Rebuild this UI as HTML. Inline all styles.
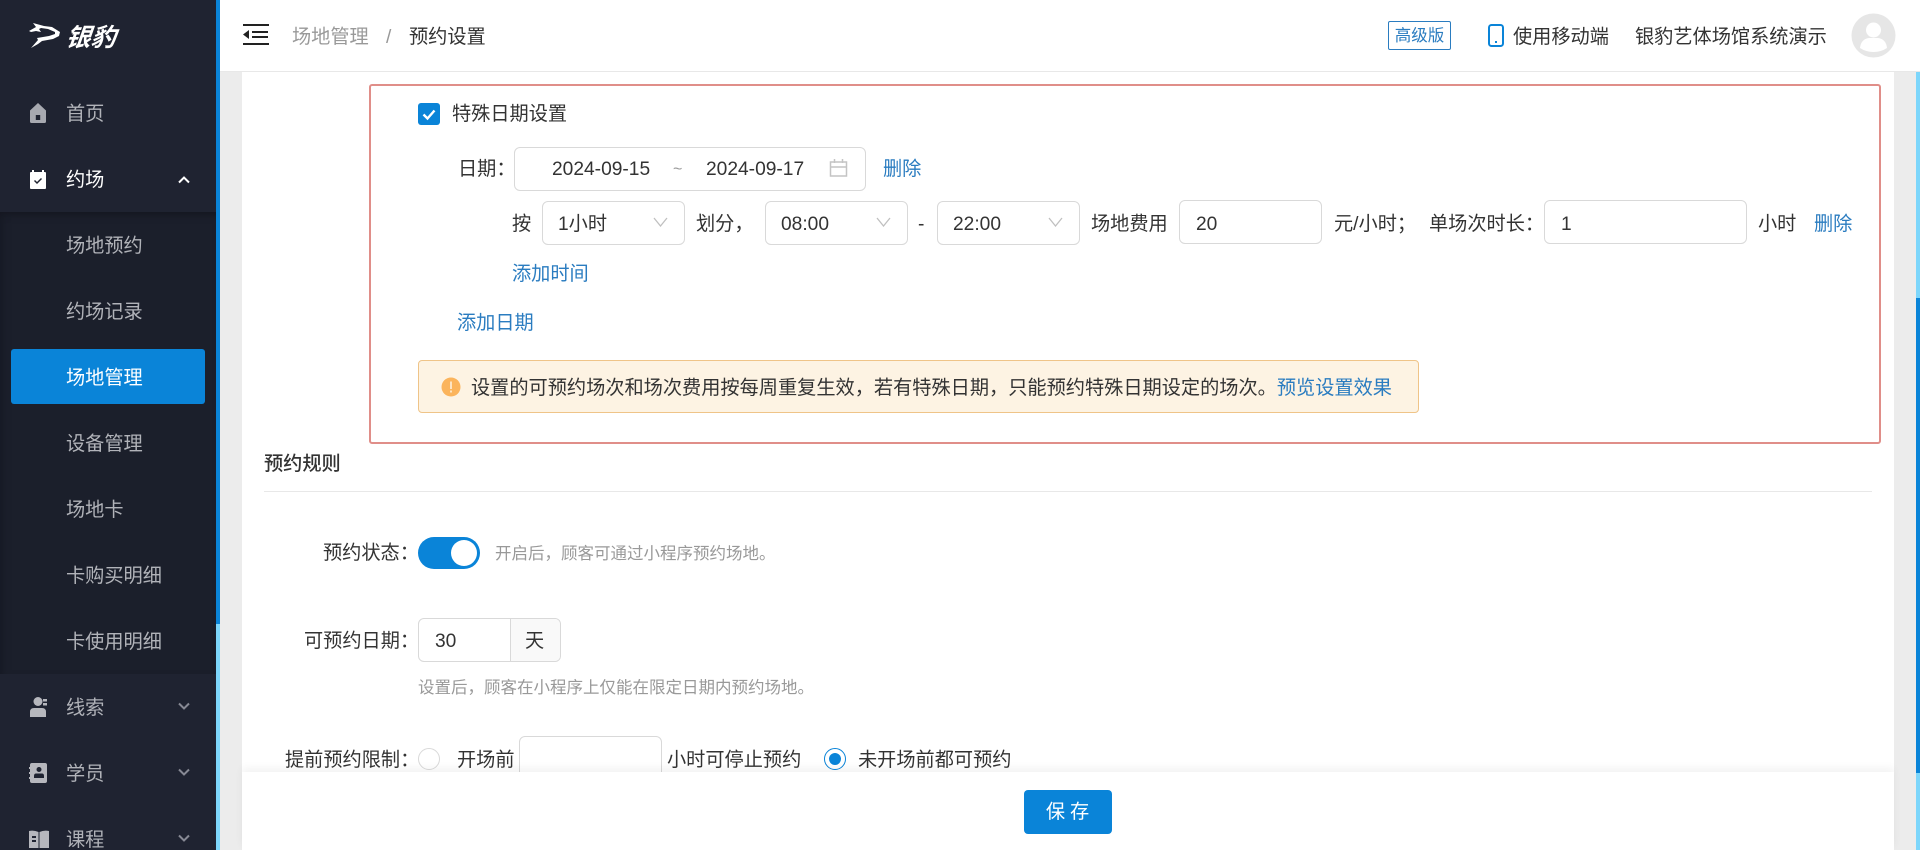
<!DOCTYPE html>
<html lang="zh-CN">
<head>
<meta charset="utf-8">
<title>预约设置</title>
<style>
*{box-sizing:border-box}
html,body{margin:0;padding:0;width:1920px;height:850px;overflow:hidden;background:#ececec}
body{position:relative;font-family:"Liberation Sans","Noto Sans CJK SC",sans-serif;font-size:19.2px;color:#333}
.a{position:absolute}
.t{position:absolute;white-space:nowrap;line-height:30px;height:30px;margin-top:2px}
.l{color:#2a7cc0}
.m{color:#b1b3b9}
.box{position:absolute;background:#fff;border:1px solid #d9d9d9;border-radius:6px}
.h{color:#999;font-size:16.5px}
svg{position:absolute;display:block}
</style>
</head>
<body>
<!-- sidebar -->
<div class="a" style="left:0;top:0;width:216px;height:850px;background:#1f2331"></div>
<div class="a" style="left:0;top:212px;width:216px;height:462px;background:#1b1f2b;box-shadow:inset 0 8px 8px -6px #14161f,inset 8px 0 8px -6px #171a25"></div>
<div class="a" style="left:216px;top:0;width:4px;height:850px;background:#7dd6fb"></div>
<div class="a" style="left:216px;top:0;width:4px;height:624px;background:#0a84d8"></div>

<svg style="left:28px;top:21px" width="34" height="29" viewBox="0 0 34 29"><path fill="#fff" d="M1 10 8 6 5 2 16 5 24 6 32 11 31 15 25 18 14 20 10 23 3 27 10 19 9 17 21 15 27 13 27 11 20 8 13 7 11 8 13 11 8 10 3 11Z"/></svg>
<div class="t" style="left:66px;top:21px;color:#fff;font-size:25px;font-weight:700;font-style:italic;letter-spacing:0;transform:skewX(-6deg)">银豹</div>

<svg style="left:29px;top:102px" width="18" height="22" viewBox="0 0 18 22"><path fill="#a7a9b0" fill-rule="evenodd" d="M9 1 17 8.500V19.500Q17 21 15.500 21H2.500Q1 21 1 19.500V8.500ZM6.800 13V18H11.200V13Z"/></svg>
<div class="t m" style="left:66px;top:98px">首页</div>

<svg style="left:29px;top:169px" width="18" height="21" viewBox="0 0 18 21"><path fill="#fff" fill-rule="evenodd" d="M3 1H5V3H13V1H15V3H16Q17 3 17 4V19Q17 20 16 20H2Q1 20 1 19V4Q1 3 2 3H3ZM5 12 8 15 13 10 12 9 8 13 6 11Z"/></svg>
<div class="t" style="left:66px;top:164px;color:#fff">约场</div>
<svg style="left:178px;top:176px" width="12" height="8" viewBox="0 0 12 8"><path fill="none" stroke="#fff" stroke-width="2" d="M1 6.500 6 1.500 11 6.500"/></svg>

<div class="t m" style="left:66px;top:230px">场地预约</div>
<div class="t m" style="left:66px;top:296px">约场记录</div>
<div class="a" style="left:11px;top:349px;width:194px;height:55px;background:#0a84d8;border-radius:3px"></div>
<div class="t" style="left:66px;top:362px;color:#fff">场地管理</div>
<div class="t m" style="left:66px;top:428px">设备管理</div>
<div class="t m" style="left:66px;top:494px">场地卡</div>
<div class="t m" style="left:66px;top:560px">卡购买明细</div>
<div class="t m" style="left:66px;top:626px">卡使用明细</div>

<svg style="left:30px;top:696px" width="18" height="22" viewBox="0 0 18 22"><circle cx="8" cy="5.500" r="4.500" fill="#b6b7bd"/><path fill="#b6b7bd" d="M0 21V16Q0 12 4 12H12Q16 12 16 16V21Z"/><rect x="13" y="3" width="4" height="2.500" fill="#b6b7bd"/><rect x="13" y="7" width="4" height="2.500" fill="#b6b7bd"/></svg>
<div class="t m" style="left:66px;top:692px">线索</div>
<svg style="left:178px;top:702px" width="12" height="8" viewBox="0 0 12 8"><path fill="none" stroke="#878994" stroke-width="2" d="M1 1.500 6 6.500 11 1.500"/></svg>

<svg style="left:29px;top:763px" width="19" height="20" viewBox="0 0 19 20"><path fill="#b6b7bd" fill-rule="evenodd" d="M3 0H16Q18 0 18 2V18Q18 20 16 20H3Q1 20 1 18V16H0V14H1V11H0V9H1V6H0V4H1V2Q1 0 3 0ZM10 4A2.500 2.500 0 1 0 10 9 2.500 2.500 0 1 0 10 4ZM5 15H15V13Q15 10.500 13 10.500H7Q5 10.500 5 13Z"/></svg>
<div class="t m" style="left:66px;top:758px">学员</div>
<svg style="left:178px;top:768px" width="12" height="8" viewBox="0 0 12 8"><path fill="none" stroke="#878994" stroke-width="2" d="M1 1.500 6 6.500 11 1.500"/></svg>

<svg style="left:29px;top:830px" width="20" height="20" viewBox="0 0 20 20"><path fill="#b6b7bd" fill-rule="evenodd" d="M0 1Q5 0 9.500 2V18H0ZM10.500 2Q15 0 20 1V18H10.500ZM3 6V8H7V6ZM3 10V12H7V10Z"/></svg>
<div class="t m" style="left:66px;top:824px">课程</div>
<svg style="left:178px;top:834px" width="12" height="8" viewBox="0 0 12 8"><path fill="none" stroke="#878994" stroke-width="2" d="M1 1.500 6 6.500 11 1.500"/></svg>

<!-- right scrollbar -->
<div class="a" style="left:1916px;top:0;width:4px;height:850px;background:#7dd6fb"></div>
<div class="a" style="left:1916px;top:298px;width:4px;height:475px;background:#0a84d8"></div>

<!-- content -->
<div class="a" style="left:242px;top:72px;width:1652px;height:778px;background:#fff"></div>

<div class="a" style="left:369px;top:84px;width:1512px;height:360px;border:2px solid #e08e89;border-radius:3px"></div>

<div class="a" style="left:418px;top:103px;width:22px;height:22px;background:#0a84d8;border-radius:3px"></div>
<svg style="left:418px;top:103px" width="22" height="22" viewBox="0 0 22 22"><path fill="none" stroke="#fff" stroke-width="2.400" d="M5.500 11.500 9.500 15.500 16.500 7.500"/></svg>
<div class="t" style="left:452px;top:98px">特殊日期设置</div>

<div class="t" style="left:458px;top:153px">日期：</div>
<div class="box" style="left:514px;top:147px;width:352px;height:44px"></div>
<div class="t" style="left:552px;top:153px">2024-09-15</div>
<div class="t" style="left:673px;top:153px;color:#999;font-size:16px">~</div>
<div class="t" style="left:706px;top:153px">2024-09-17</div>
<svg style="left:829px;top:159px" width="19" height="18" viewBox="0 0 19 18"><path fill="none" stroke="#c4c4c4" stroke-width="1.500" d="M1.500 3H17.500V17H1.500ZM1.500 8H17.500M5.500 0V4M13.500 0V4"/></svg>
<div class="t l" style="left:883px;top:153px">删除</div>

<div class="t" style="left:512px;top:208px">按</div>
<div class="box" style="left:542px;top:201px;width:143px;height:44px"></div>
<div class="t" style="left:558px;top:208px">1小时</div>
<svg style="left:653px;top:217px" width="15" height="10" viewBox="0 0 15 10"><path fill="none" stroke="#c0c0c0" stroke-width="1.300" d="M1 1 7.500 9 14 1"/></svg>
<div class="t" style="left:696px;top:208px">划分，</div>
<div class="box" style="left:765px;top:201px;width:143px;height:44px"></div>
<div class="t" style="left:781px;top:208px">08:00</div>
<svg style="left:876px;top:217px" width="15" height="10" viewBox="0 0 15 10"><path fill="none" stroke="#c0c0c0" stroke-width="1.300" d="M1 1 7.500 9 14 1"/></svg>
<div class="t" style="left:918px;top:208px">-</div>
<div class="box" style="left:937px;top:201px;width:143px;height:44px"></div>
<div class="t" style="left:953px;top:208px">22:00</div>
<svg style="left:1048px;top:217px" width="15" height="10" viewBox="0 0 15 10"><path fill="none" stroke="#c0c0c0" stroke-width="1.300" d="M1 1 7.500 9 14 1"/></svg>
<div class="t" style="left:1091px;top:208px">场地费用</div>
<div class="box" style="left:1179px;top:200px;width:143px;height:44px"></div>
<div class="t" style="left:1196px;top:208px">20</div>
<div class="t" style="left:1334px;top:208px">元/小时；</div>
<div class="t" style="left:1429px;top:208px">单场次时长：</div>
<div class="box" style="left:1544px;top:200px;width:203px;height:44px"></div>
<div class="t" style="left:1561px;top:208px">1</div>
<div class="t" style="left:1758px;top:208px">小时</div>
<div class="t l" style="left:1814px;top:208px">删除</div>

<div class="t l" style="left:512px;top:258px">添加时间</div>
<div class="t l" style="left:457px;top:307px">添加日期</div>

<div class="a" style="left:418px;top:360px;width:1001px;height:53px;background:#fdf3e3;border:1px solid #efc488;border-radius:4px"></div>
<svg style="left:441px;top:377px" width="20" height="20" viewBox="0 0 20 20"><circle cx="10" cy="10" r="9.500" fill="#fbb45c"/><rect x="9" y="4.500" width="2" height="7.500" fill="#fde4c3"/><rect x="9" y="13.500" width="2" height="2" fill="#fde4c3"/></svg>
<div class="t" style="left:471px;top:372px">设置的可预约场次和场次费用按每周重复生效，若有特殊日期，只能预约特殊日期设定的场次。<span class="l">预览设置效果</span></div>

<div class="t" style="left:264px;top:448px;font-weight:500">预约规则</div>
<div class="a" style="left:264px;top:491px;width:1608px;height:1px;background:#e8e8e8"></div>

<div class="t" style="left:323px;top:537px">预约状态：</div>
<div class="a" style="left:418px;top:537px;width:62px;height:32px;background:#0a84d8;border-radius:16px"></div>
<div class="a" style="left:451px;top:540px;width:26px;height:26px;background:#fff;border-radius:50%"></div>
<div class="t h" style="left:495px;top:537px">开启后，顾客可通过小程序预约场地。</div>

<div class="t" style="left:304px;top:625px">可预约日期：</div>
<div class="box" style="left:418px;top:618px;width:143px;height:44px;overflow:hidden"><div class="a" style="left:91px;top:0;width:50px;height:42px;background:#f9f9f9;border-left:1px solid #d9d9d9"></div></div>
<div class="t" style="left:435px;top:625px">30</div>
<div class="t" style="left:525px;top:625px">天</div>
<div class="t h" style="left:418px;top:671px">设置后，顾客在小程序上仅能在限定日期内预约场地。</div>

<div class="t" style="left:285px;top:744px">提前预约限制：</div>
<div class="a" style="left:418px;top:748px;width:22px;height:22px;background:#fff;border:1px solid #d9d9d9;border-radius:50%"></div>
<div class="t" style="left:457px;top:744px">开场前</div>
<div class="box" style="left:519px;top:736px;width:143px;height:60px"></div>
<div class="t" style="left:667px;top:744px">小时可停止预约</div>
<div class="a" style="left:824px;top:748px;width:22px;height:22px;background:#fff;border:1px solid #0a84d8;border-radius:50%"></div>
<div class="a" style="left:829px;top:753px;width:12px;height:12px;background:#0a84d8;border-radius:50%"></div>
<div class="t" style="left:858px;top:744px">未开场前都可预约</div>

<!-- footer -->
<div class="a" style="left:242px;top:772px;width:1652px;height:78px;background:#fff;box-shadow:0 -4px 8px rgba(0,0,0,.05)"></div>
<div class="a" style="left:1024px;top:790px;width:88px;height:44px;background:#0a84d8;border-radius:4px;color:#fff;text-align:center;line-height:45px;letter-spacing:5px;padding-left:4px">保存</div>

<!-- header -->
<div class="a" style="left:220px;top:0;width:1700px;height:72px;background:#fff;border-bottom:1px solid #e8e8e8"></div>
<svg style="left:243px;top:23px" width="26" height="23" viewBox="0 0 26 23"><path fill="#222" d="M0 1H26V3H0ZM9 8H25V10H9ZM9 13H25V15H9ZM0 20H26V22H0ZM6 7V16L0 11.500Z"/></svg>
<div class="t" style="left:292px;top:21px;color:#999">场地管理</div>
<div class="t" style="left:386px;top:21px;color:#999">/</div>
<div class="t" style="left:409px;top:21px">预约设置</div>

<div class="a" style="left:1388px;top:21px;width:63px;height:29px;border:1px solid #2a7cc0;border-radius:2px;color:#2a7cc0;font-size:16.5px;line-height:28px;text-align:center">高级版</div>
<svg style="left:1488px;top:24px" width="16" height="23" viewBox="0 0 16 23"><rect x="1" y="1" width="14" height="21" rx="2.500" fill="none" stroke="#0a84d8" stroke-width="2"/><rect x="7" y="17" width="2" height="2" fill="#0a84d8"/></svg>
<div class="t" style="left:1513px;top:21px">使用移动端</div>
<div class="t" style="left:1635px;top:21px">银豹艺体场馆系统演示</div>
<svg style="left:1851px;top:13px" width="45" height="45" viewBox="0 0 45 45"><circle cx="22.500" cy="22.500" r="22" fill="#e6e6e6"/><circle cx="22.500" cy="17" r="7.500" fill="#fff"/><path fill="#fff" d="M9 35Q10 26 18 25H27Q35 26 36 35Q30 39 22.500 39 15 39 9 35Z"/></svg>
</body>
</html>
